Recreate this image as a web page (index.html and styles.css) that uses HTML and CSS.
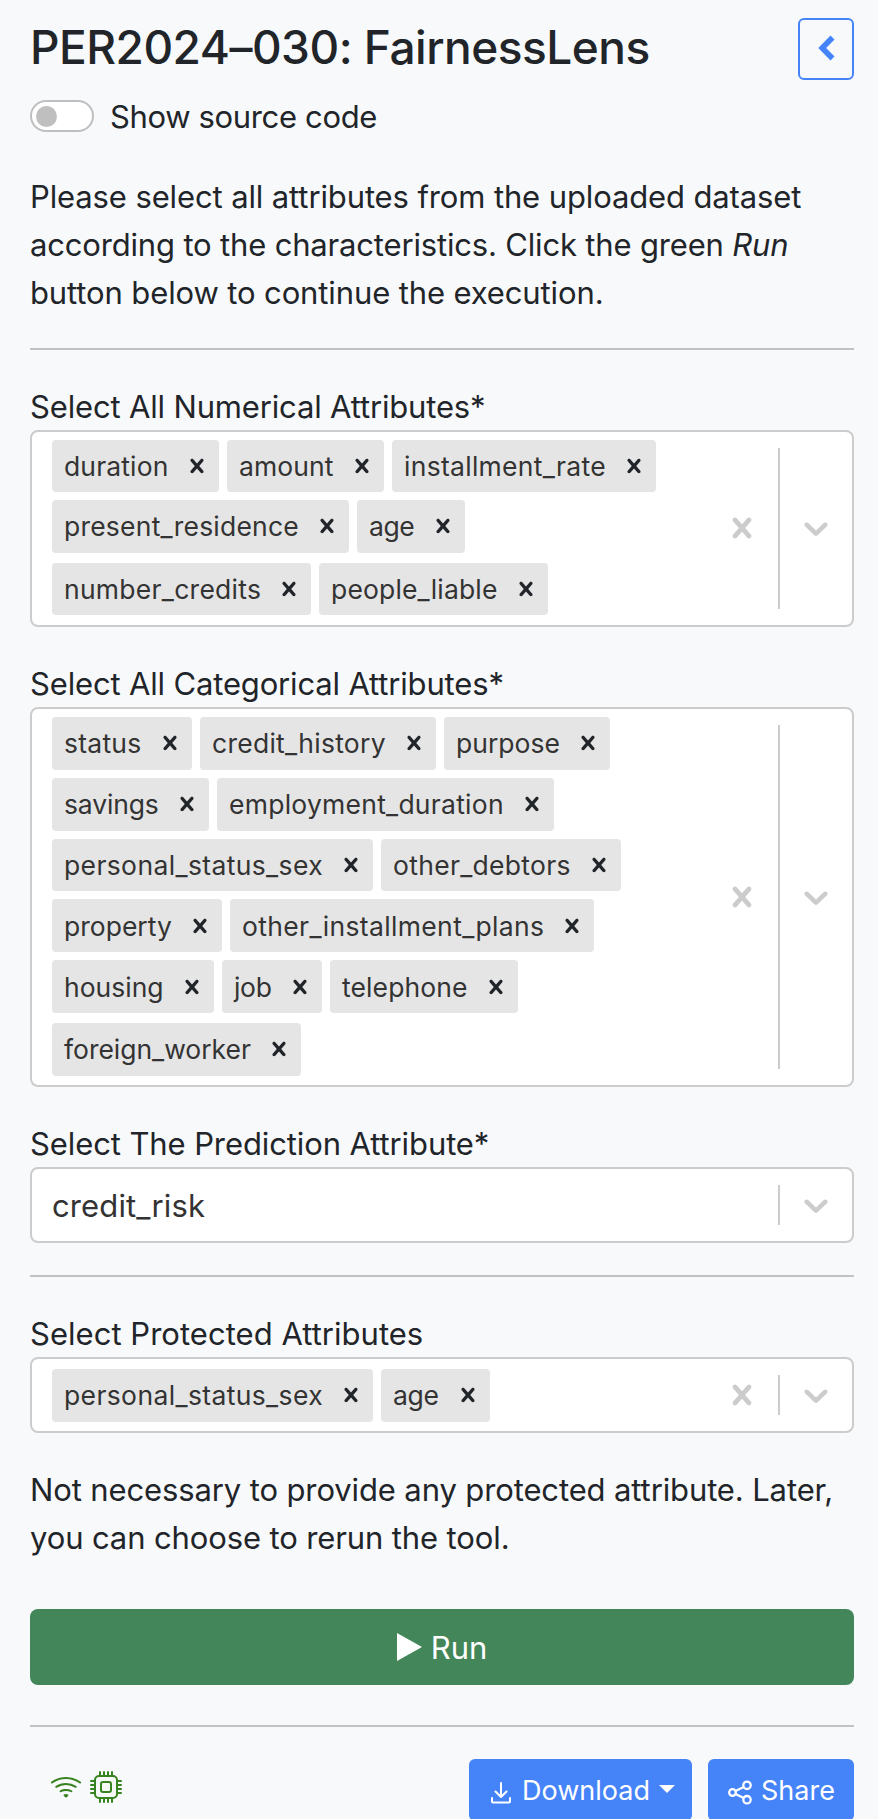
FILE: index.html
```html
<!DOCTYPE html>
<html lang="en">
<head>
<meta charset="utf-8">
<title>PER2024–030: FairnessLens</title>
<link rel="stylesheet" href="styles.css">
</head>
<body>
<svg class="defs" width="0" height="0" aria-hidden="true">
  <symbol id="cross" viewBox="0 0 20 20"><path d="M14.348 14.849c-0.469 0.469-1.229 0.469-1.697 0l-2.651-3.030-2.651 3.029c-0.469 0.469-1.229 0.469-1.697 0-0.469-0.469-0.469-1.229 0-1.697l2.758-3.15-2.759-3.152c-0.469-0.469-0.469-1.228 0-1.697s1.228-0.469 1.697 0l2.652 3.031 2.651-3.031c0.469-0.469 1.228-0.469 1.697 0s0.469 1.229 0 1.697l-2.758 3.152 2.758 3.15c0.469 0.469 0.469 1.229 0 1.698z"/></symbol>
  <symbol id="down" viewBox="0 0 20 20"><path d="M4.516 7.548c0.436-0.446 1.043-0.481 1.576 0l3.908 3.747 3.908-3.747c0.533-0.481 1.141-0.446 1.574 0 0.436 0.445 0.408 1.197 0 1.615-0.406 0.418-4.695 4.502-4.695 4.502-0.217 0.223-0.502 0.335-0.787 0.335s-0.57-0.112-0.789-0.335c0 0-4.287-4.084-4.695-4.502s-0.436-1.17 0-1.615z"/></symbol>
</svg>
<main class="page">
  <header class="header">
    <h2 class="title">PER2024–030: FairnessLens</h2>
    <button class="back" aria-label="Back"><svg width="18" height="28" viewBox="0 0 18 28"><path d="M15.500 2.500 5.200 13l10.300 10.500" fill="none" stroke="currentColor" stroke-width="5.600"/></svg></button>
  </header>
  <label class="toggle-row"><span class="toggle"><span class="knob"></span></span><span class="toggle-text">Show source code</span></label>
  <p class="intro">Please select all attributes from the uploaded dataset<br><span class="intro-middle">according to the characteristics. Click the green <em>Run</em></span><br>button below to continue the execution.</p>
  <hr class="rule">

  <div class="label label-numerical">Select All Numerical Attributes*</div>
  <div class="select select-numerical">
    <div class="rows">
      <div class="row"><span class="chip" style="--w:167px;--ls:.14px">duration<svg><use href="#cross"/></svg></span><span class="chip" style="--w:157px;--ls:.1px">amount<svg><use href="#cross"/></svg></span><span class="chip" style="--w:264px;--ls:.29px">installment_rate<svg><use href="#cross"/></svg></span></div>
      <div class="row"><span class="chip" style="--w:297px;--ls:.22px">present_residence<svg><use href="#cross"/></svg></span><span class="chip" style="--w:108px;--ls:-.4px">age<svg><use href="#cross"/></svg></span></div>
      <div class="row"><span class="chip" style="--w:259px;--ls:.27px">number_credits<svg><use href="#cross"/></svg></span><span class="chip" style="--w:229px;--ls:.16px">people_liable<svg><use href="#cross"/></svg></span></div>
    </div>
    <div class="controls"><svg class="clear"><use href="#cross"/></svg><span class="separator"></span><svg class="arrow"><use href="#down"/></svg></div>
  </div>

  <div class="label label-categorical">Select All Categorical Attributes*</div>
  <div class="select select-categorical">
    <div class="rows">
      <div class="row"><span class="chip" style="--w:140px;--ls:.25px">status<svg><use href="#cross"/></svg></span><span class="chip" style="--w:236px;--ls:.27px">credit_history<svg><use href="#cross"/></svg></span><span class="chip" style="--w:166px;--ls:0px">purpose<svg><use href="#cross"/></svg></span></div>
      <div class="row"><span class="chip" style="--w:157px;--ls:-.15px">savings<svg><use href="#cross"/></svg></span><span class="chip" style="--w:337px;--ls:.25px">employment_duration<svg><use href="#cross"/></svg></span></div>
      <div class="row"><span class="chip" style="--w:321px;--ls:.37px">personal_status_sex<svg><use href="#cross"/></svg></span><span class="chip" style="--w:240px;--ls:.3px">other_debtors<svg><use href="#cross"/></svg></span></div>
      <div class="row"><span class="chip" style="--w:170px;--ls:0px">property<svg><use href="#cross"/></svg></span><span class="chip" style="--w:364px;--ls:.35px">other_installment_plans<svg><use href="#cross"/></svg></span></div>
      <div class="row"><span class="chip" style="--w:162px;--ls:0px">housing<svg><use href="#cross"/></svg></span><span class="chip" style="--w:100px;--ls:-.3px">job<svg><use href="#cross"/></svg></span><span class="chip" style="--w:188px;--ls:.1px">telephone<svg><use href="#cross"/></svg></span></div>
      <div class="row"><span class="chip" style="--w:249px;--ls:-.02px">foreign_worker<svg><use href="#cross"/></svg></span></div>
    </div>
    <div class="controls"><svg class="clear"><use href="#cross"/></svg><span class="separator"></span><svg class="arrow"><use href="#down"/></svg></div>
  </div>

  <div class="label label-prediction">Select The Prediction Attribute*</div>
  <div class="select select-single">
    <div class="value">credit_risk</div>
    <div class="controls"><span class="separator"></span><svg class="arrow"><use href="#down"/></svg></div>
  </div>
  <hr class="rule">

  <div class="label label-protected">Select Protected Attributes</div>
  <div class="select select-single">
    <div class="rows">
      <div class="row"><span class="chip" style="--w:321px;--ls:.37px">personal_status_sex<svg><use href="#cross"/></svg></span><span class="chip" style="--w:109px;--ls:-.3px">age<svg><use href="#cross"/></svg></span></div>
    </div>
    <div class="controls"><svg class="clear"><use href="#cross"/></svg><span class="separator"></span><svg class="arrow"><use href="#down"/></svg></div>
  </div>
  <p class="note">Not necessary to provide any protected attribute. Later,<br>you can choose to rerun the tool.</p>

  <button class="run"><svg width="25" height="28" viewBox="0 0 25 28"><path d="M0 0 25 14 0 28z" fill="currentColor"/></svg><span class="run-text">Run</span></button>
  <hr class="rule">

  <footer class="footer">
    <div class="status">
      <svg class="wifi" width="32" height="32" viewBox="0 0 16 16" fill="currentColor"><path d="M15.384 6.115a.485.485 0 0 0-.047-.736A12.440 12.440 0 0 0 8 3C5.259 3 2.723 3.882.663 5.379a.485.485 0 0 0-.048.736.518.518 0 0 0 .668.050A11.450 11.450 0 0 1 8 4c2.507 0 4.827.802 6.716 2.164.205.148.490.130.668-.049z"/><path d="M13.229 8.271a.482.482 0 0 0-.063-.745A9.455 9.455 0 0 0 8 6c-1.905 0-3.680.560-5.166 1.526a.480.480 0 0 0-.063.745.525.525 0 0 0 .652.065A8.460 8.460 0 0 1 8 7a8.460 8.460 0 0 1 4.576 1.336c.206.132.480.108.653-.065m-2.183 2.183c.226-.226.185-.605-.1-.750A6.500 6.500 0 0 0 8 9c-1.060 0-2.062.254-2.946.704-.285.145-.326.524-.1.750l.015.015c.160.160.407.190.611.090A5.500 5.500 0 0 1 8 10c.868 0 1.690.201 2.420.560.203.100.450.070.610-.091zM9.060 12.440c.196-.196.198-.520-.040-.660A2 2 0 0 0 8 11.500a2 2 0 0 0-1.020.280c-.238.140-.236.464-.040.660l.706.706a.500.500 0 0 0 .707 0l.707-.707z"/></svg>
      <svg class="cpu" width="32" height="32" viewBox="0 0 16 16" fill="currentColor"><path d="M5 0a.5.5 0 0 1 .5.5V2h1V.5a.5.5 0 0 1 1 0V2h1V.5a.5.5 0 0 1 1 0V2h1V.5a.5.5 0 0 1 1 0V2A2.500 2.500 0 0 1 14 4.500h1.500a.5.5 0 0 1 0 1H14v1h1.500a.5.5 0 0 1 0 1H14v1h1.500a.5.5 0 0 1 0 1H14v1h1.500a.5.5 0 0 1 0 1H14a2.500 2.500 0 0 1-2.500 2.500v1.500a.5.5 0 0 1-1 0V14h-1v1.500a.5.5 0 0 1-1 0V14h-1v1.500a.5.5 0 0 1-1 0V14h-1v1.500a.5.5 0 0 1-1 0V14A2.500 2.500 0 0 1 2 11.500H.5a.5.5 0 0 1 0-1H2v-1H.5a.5.5 0 0 1 0-1H2v-1H.5a.5.5 0 0 1 0-1H2v-1H.5a.5.5 0 0 1 0-1H2A2.500 2.500 0 0 1 4.500 2V.5A.5.5 0 0 1 5 0m-.5 3A1.500 1.500 0 0 0 3 4.500v7A1.500 1.500 0 0 0 4.500 13h7a1.500 1.500 0 0 0 1.500-1.500v-7A1.500 1.500 0 0 0 11.500 3zM5 6.500A1.500 1.500 0 0 1 6.500 5h3A1.500 1.500 0 0 1 11 6.500v3A1.500 1.500 0 0 1 9.500 11h-3A1.500 1.500 0 0 1 5 9.500zM6.500 6a.5.5 0 0 0-.5.5v3a.5.5 0 0 0 .5.5h3a.5.5 0 0 0 .5-.5v-3a.5.5 0 0 0-.5-.5z"/></svg>
    </div>
    <button class="action download">
      <svg width="20" height="22" viewBox="0 0 20 22" fill="none" stroke="currentColor" stroke-width="2" stroke-linecap="round" stroke-linejoin="round"><path d="M10 1v14M4.500 9.500l5.500 5.500L15.500 9.500M1 16v3.500q0 1 1 1h16q1 0 1-1V16"/></svg>
      <span class="download-text">Download</span><span class="caret"></span>
    </button>
    <button class="action share">
      <svg width="24" height="25" viewBox="0 0 24 25" fill="none" stroke="currentColor" stroke-width="2.300"><circle cx="4.500" cy="12.500" r="3.300"/><circle cx="19" cy="5.300" r="3.700"/><circle cx="19" cy="19.700" r="3.700"/><path d="m7.500 11 8.200-4M7.500 14l8.200 4"/></svg>
      <span class="share-text">Share</span>
    </button>
  </footer>
</main>
</body>
</html>
```
FILE: styles.css
```css
* { box-sizing: border-box; }
html, body { height: 1819px; overflow: hidden; }
body {
  margin: 0;
  background: #f8f9fb;
  color: #212529;
  font: 400 31px/48px Inter, "Liberation Sans", sans-serif;
  letter-spacing: -0.12px;
}
.defs { display: block; height: 0; }
.page { padding: 18px 24px 0 30px; }
button { font: inherit; padding: 0; border: 0; letter-spacing: 0; }
.header { display: flex; justify-content: space-between; align-items: flex-start; height: 68px; }
.title { margin: 0; font-size: 46px; line-height: 58px; font-weight: 500; letter-spacing: -0.5px; white-space: nowrap; }
.back {
  width: 56px; height: 62px; display: flex; align-items: center; justify-content: center;
  border: 2px solid #4583f9; border-radius: 6px; background: transparent; color: #4583f9;
}
.toggle-row { display: flex; align-items: center; gap: 16px; height: 60px; }
.toggle { width: 64px; height: 32px; border: 2px solid #bfbfbf; border-radius: 16px; background: #fff; display: flex; align-items: center; padding-left: 3.5px; }
.toggle-text { padding-top: 2px; letter-spacing: -0.35px; }
.knob { width: 21px; height: 21px; border-radius: 50%; background: #bfbfbf; }
.intro, .note { margin: 0; white-space: nowrap; }
.intro { padding-top: 27px; }
.intro-middle { letter-spacing: -0.17px; }
.rule { height: 2px; margin: 32px 0; border: 0; background: #c0c2c5; }
.intro + .rule { margin-top: 31px; }
.label { height: 48px; padding-top: 1px; white-space: nowrap; letter-spacing: -0.16px; }
.label-categorical, .label-prediction { margin-top: 32px; }
.label-prediction { letter-spacing: -0.1px; }
.label-protected { letter-spacing: 0.03px; }
.select { display: flex; justify-content: space-between; background: #fff; border: 2px solid #ccc; border-radius: 8px; }
.select-numerical { height: 197px; }
.select-categorical { height: 380px; }
.select-single { height: 76px; align-items: stretch; }
.rows { display: flex; flex-direction: column; gap: 8px; padding: 8px 0 0 20px; }
.select-numerical .rows { gap: 7.800px; }
.select-numerical .row:last-child { margin-top: 2.200px; }
.select-numerical .rows { padding-top: 7.500px; }
.select-single .rows { padding-top: 10px; }
.row { display: flex; gap: 8px; }
.row:last-child:not(:first-child) { margin-top: 2px; }
.chip {
  width: var(--w); height: 52.8px; display: flex; align-items: center; justify-content: space-between; padding: 0 8px 0 12px;
  border-radius: 4px; background: #e5e5e5; color: #333; font-size: 26.500px; letter-spacing: var(--ls); white-space: nowrap;
}
.chip svg { flex: none; width: 28px; height: 28px; fill: #212529; }
.value { padding: 13px 0 0 20px; color: #333; letter-spacing: 0.12px; }
.controls { display: flex; align-items: center; }
.controls svg { width: 40px; height: 40px; fill: #ccc; }
.select-numerical .controls svg { margin-bottom: 1px; }
.clear { margin-right: 16px; }
.separator { align-self: stretch; width: 2px; margin: 16px 0; background: #ccc; }
.arrow { margin: 0 16px; }
.note { padding-top: 33px; }
.run {
  display: flex; align-items: center; justify-content: center; gap: 9px; width: 100%; height: 76px;
  margin-top: 47px; border-radius: 8px; background: #428659; color: #fff;
}
.run-text { padding-top: 2px; }
.run + .rule { margin-top: 40px; }
.footer { display: flex; align-items: flex-start; }
.status { display: flex; gap: 8px; padding: 12px 0 0 20px; margin-right: auto; color: #37831f; }
.action {
  display: flex; align-items: center; height: 62px; border-radius: 6px;
  background: #4583f9; color: #fff; font-size: 27px;
}
.action svg { margin-top: 5px; }
.download { width: 223px; padding-left: 22px; }
.download-text, .share-text { padding-top: 2px; }
.download-text { margin-left: 11px; }
.caret { margin: -3px 0 0 9px; border: 8px solid transparent; border-top-color: #fff; border-bottom: 0; }
.share { width: 146px; margin-left: 16px; padding-left: 20px; gap: 9px; }
```
